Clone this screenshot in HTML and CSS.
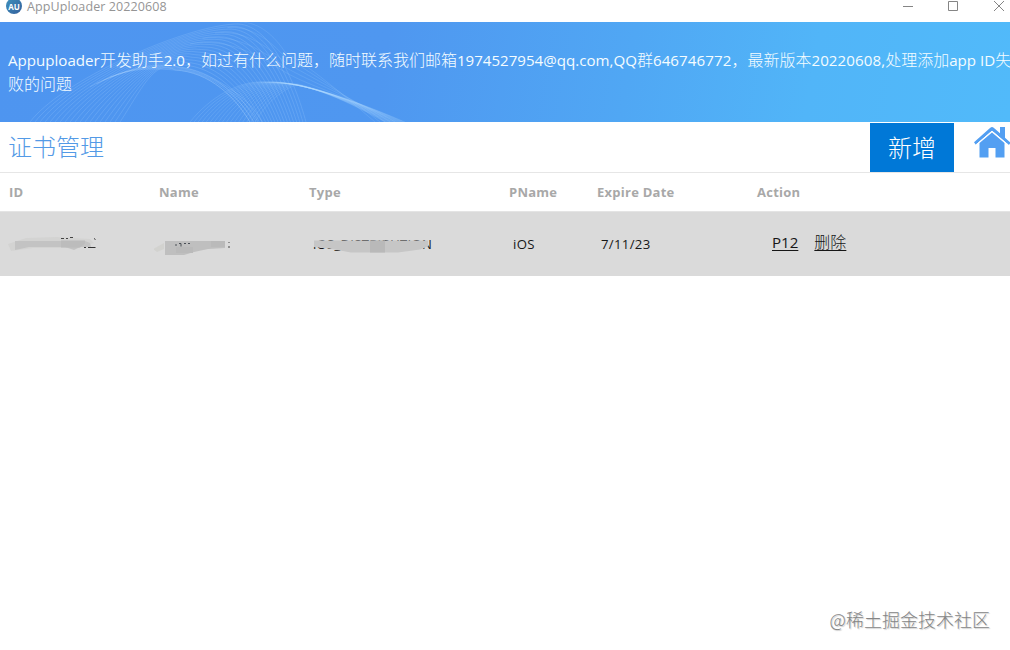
FILE: index.html
```html
<!DOCTYPE html>
<html lang="zh-CN">
<head>
<meta charset="utf-8">
<title>AppUploader 20220608</title>
<link rel="stylesheet" href="styles.css">
</head>
<body>
<div class="window">
  <header class="titlebar">
    <span class="app-logo">AU</span>
    <span class="app-title">AppUploader 20220608</span>
    <svg class="controls" width="110" height="14" viewBox="0 0 110 14" fill="none" stroke="#858585">
      <path d="M3 6.500h10M48.500 1.500h9v9h-9zM94 1l10 10M104 1l-10 10"/>
    </svg>
  </header>
  <section class="banner">
    <svg class="waves" width="420" height="100" viewBox="0 0 420 100" fill="none"></svg>
    <p class="notice"><span class="lt">Appuploader</span>开发助手<span class="lt">2.0</span>，如过有什么问题，随时联系我们邮箱<span class="lt">1974527954@qq.com,QQ</span>群<span class="lt num">646746772</span>，最新版本<span class="lt num">20220608,</span>处理添加<span class="lt">app ID</span>失<br>败的问题</p>
  </section>
  <div class="toolbar">
    <h1 class="heading">证书管理</h1>
    <button class="add">新增</button>
    <svg class="home" width="36" height="34" viewBox="0 0 36 34" fill="#539ff2">
      <path d="M18 6.500 30.500 17v14.500H21.500V22h-7v9.500H5.500V17z"/>
      <path d="M0 16.300 16.300 1.700q1.700-1.400 3.400 0L26 7.300V1h5v10.800l5.500 4.900-1.600 2.300L18 4.700 1.800 18.800z"/>
      <path d="M1.500 19.200 18 5.200 34.500 19.200" fill="none" stroke="#fff" stroke-width="1"/>
    </svg>
  </div>
  <div class="row head">
    <span>ID</span><span>Name</span><span>Type</span><span>PName</span><span>Expire Date</span><span>Action</span>
  </div>
  <div class="row record">
    <span class="masked">
      <svg width="100" height="24" viewBox="0 0 100 24">
        <path d="M4 12 22 6l30-1 34 2 4 4-15 5-46 0-22 3z" fill="#d3d3d2"/>
        <path d="M57 6.500h3m2 0h2m2-1h3" stroke="#444" fill="none"/>
        <path d="M80 15.500h2m2 0h2M91.500 7.500l-1.500-1M86 15.500h5.500" stroke="#333" fill="none"/>
        <path d="M11 9h70l5 2 1 4H76l-6 3-9-3H25l-14 3z" fill="#c3c3c3"/>
        <path d="M57 8.500h24v3l-5 4H57z" fill="#bcbcbc"/>
      </svg>
    </span>
    <span class="masked">
      <svg width="100" height="24" viewBox="0 0 100 24">
        <path d="M-1 17 10 11v6l-7 3z" fill="#d2d2cf"/>
        <path d="M11 9h60v7l-17 1-14 3-10 3H11z" fill="#bfbfbf"/>
        <path d="M22 12v2M25 11.500h2v3M30 11.500h2m2 0h2" stroke="#4b5057" fill="none"/>
        <path d="M22 15h17v6H22zM57 9h14v6H57z" fill="#bababa"/>
        <path d="M75 10v1m0 3v2" stroke="#444"/>
      </svg>
    </span>
    <span class="masked type-cell"><span class="type-text">iOS_DISTRIBUTION</span>
      <svg class="smudge" width="140" height="24" viewBox="0 0 140 24">
        <path d="M-2 6 1 4h4l2 4 6 1v6L-1 15z" fill="#dadada"/>
        <path d="M4 8.500h114v6l-8 3-22 3H41l-22-4L4 15z" fill="#c6c6c6"/>
        <path d="M60 8.500h15v12H60z" fill="#b9b9b9"/>
      </svg>
    </span>
    <span class="cell">iOS</span><span class="cell">7/11/23</span>
    <span class="actions"><a>P12</a><a class="delete">删除</a></span>
  </div>
  <main class="content"><span class="watermark">@稀土掘金技术社区</span></main>
</div>
<script src="waves.js"></script>
</body>
</html>
```
FILE: styles.css
```css
* { box-sizing: border-box; }
body { margin: 0; background: #fff; font-family: "Open Sans", "Noto Sans CJK SC", sans-serif; }
.window { width: 1010px; height: 650px; overflow: hidden; display: flex; flex-direction: column; }
.titlebar { height: 22px; flex: none; display: flex; align-items: flex-start; padding-left: 6px; }
.app-logo { width: 16px; height: 16px; margin: -2px 5px 0 0; border-radius: 50%; background: linear-gradient(135deg, #3f92bd, #335f9c); color: #fff; font-size: 8px; font-weight: 700; line-height: 17px; text-align: center; }
.app-title { font-size: 12.5px; line-height: 13px; color: #959595; letter-spacing: .1px; }
.controls { margin-left: auto; }
.banner { position: relative; height: 100px; flex: none; padding: 26px 0 0 8px; background: linear-gradient(100deg, #4e95f0 0%, #4f97f0 38%, #50a7f4 62%, #51b5f8 80%, #51bafa 100%); }
.waves { position: absolute; left: 0; top: 0; }
.notice { position: relative; margin: 0; font-size: 16px; line-height: 24px; color: #f4fcff; white-space: nowrap; font-weight: 300; }
.lt { font-size: 15.1px; font-weight: 400; }
.num { letter-spacing: .09px; }
.toolbar { height: 51px; flex: none; display: flex; align-items: flex-start; border-bottom: 1px solid #e6e6e6; padding: 1px 0 0 8px; }
.heading { margin: 0; font-size: 24px; line-height: 48px; font-weight: 300; color: #539ae6; }
.add { margin: 0 20px 0 auto; width: 84px; height: 49px; border: 0; padding: 0 0 1px; background: #0078d7; color: #fff; font: 300 24px/48px "Noto Sans CJK SC", sans-serif; }
.home { margin-top: 3px; }
.row { display: grid; grid-template-columns: 150px 150px 200px 88px 160px 1fr; padding-left: 9px; flex: none; align-items: center; }
.head { height: 38px; font-size: 13px; font-weight: 700; color: #a8a8a8; letter-spacing: .25px; }
.record { height: 65px; background: #dadada; border-top: 1px solid #e4e4e4; color: #161616; }
.cell { font-size: 13.2px; padding-left: 4px; line-height: 18px; letter-spacing: .3px; }
.masked { position: relative; height: 24px; margin-left: -5px; }
.masked svg { display: block; }
.type-cell { margin-left: 0; }
.type-text { font-size: 13px; line-height: 18px; padding-left: 4px; position: absolute; left: 0; top: 3px; letter-spacing: .33px; }
.type-cell .smudge { position: relative; left: 1px; }
.actions { display: flex; gap: 16px; padding: 0 0 4px 15px; font-size: 15.1px; line-height: 24px; }
.actions a { text-decoration: underline; text-underline-offset: 2px; text-decoration-thickness: 1px; }
.delete { font-size: 16px; font-weight: 300; }
.content { flex: 1; display: flex; justify-content: flex-end; align-items: flex-end; padding: 0 20px 19px 0; }
.watermark { font: 300 18px/24px "Noto Sans CJK SC", sans-serif; color: #858585; text-shadow: 1px 1px 1px #ccc; }
```
FILE: waves.js
```js
// Each family blends between two curves of two cubic segments to form a mesh of fine lines.
const families = [
  [[30, 100, 60, 60, 180, 5, 235, 2, 270, 0, 295, 60, 306, 100],
   [120, 100, 140, 70, 155, 35, 175, 48, 210, 50, 235, 75, 250, 100], 18, .19],
  [[90, 65, 120, 48, 140, 45, 175, 48, 210, 50, 235, 75, 250, 100],
   [110, 55, 150, 40, 160, 43, 180, 45, 210, 50, 250, 75, 262, 100], 3, .22],
  [[190, 100, 210, 75, 240, 58, 265, 60, 300, 58, 340, 75, 385, 100],
   [255, 100, 270, 75, 285, 68, 297, 62, 330, 70, 370, 85, 405, 100], 16, .17],
  [[240, 0, 260, 0, 275, 15, 285, 30, 310, 45, 340, 70, 375, 100],
   [190, 22, 230, 15, 260, 35, 285, 50, 310, 65, 360, 78, 395, 100], 4, .15]
];
const svg = document.querySelector(".waves");
for (const [from, to, count, opacity] of families) {
  for (let i = 0; i <= count; i++) {
    const p = from.map((v, k) => v + (to[k] - v) * i / count);
    const path = document.createElementNS("http://www.w3.org/2000/svg", "path");
    path.setAttribute("d", `M${p[0]} ${p[1]}C${p.slice(2).join(" ")}`);
    path.setAttribute("stroke", `rgba(180,220,255,${opacity})`);
    svg.append(path);
  }
}
```
